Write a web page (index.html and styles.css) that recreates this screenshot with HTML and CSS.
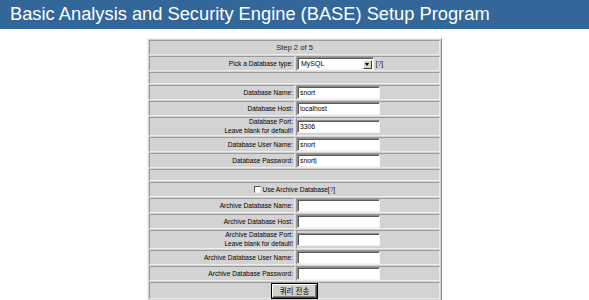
FILE: index.html
```html
<!DOCTYPE html>
<html lang="en">
<head>
  <meta charset="UTF-8" />
  <title>BASE Setup Program</title>
  <link rel="stylesheet" href="styles.css">
</head>
<body>
  <div class="mainheader">Basic Analysis and Security Engine (BASE) Setup Program</div>

  <form class="setup">
    <table class="setup-table">
      <tr><td colspan="2" class="step">Step 2 of 5</td></tr>
      <tr>
        <td class="label">Pick a Database type:</td>
        <td class="field">
          <span class="select"><span class="select-text">MySQL</span><span class="select-btn"></span></span>
          <span class="help">[<a href="#">?</a>]</span>
        </td>
      </tr>
      <tr class="spacer"><td colspan="2"></td></tr>
      <tr><td class="label">Database Name:</td><td class="field"><input type="text" value="snort"></td></tr>
      <tr><td class="label">Database Host:</td><td class="field"><input type="text" value="localhost"></td></tr>
      <tr class="double"><td class="label">Database Port:<br>Leave blank for default!</td><td class="field"><input type="text" value="3306"></td></tr>
      <tr><td class="label">Database User Name:</td><td class="field"><input type="text" value="snort"></td></tr>
      <tr><td class="label">Database Password:</td><td class="field"><input type="text" value="snort|"></td></tr>
      <tr class="spacer"><td colspan="2"></td></tr>
      <tr><td colspan="2" class="center"><span class="checkbox"></span> Use Archive Database[<a href="#">?</a>]</td></tr>
      <tr><td class="label">Archive Database Name:</td><td class="field"><input type="text"></td></tr>
      <tr><td class="label">Archive Database Host:</td><td class="field"><input type="text"></td></tr>
      <tr class="double"><td class="label">Archive Database Port:<br>Leave blank for default!</td><td class="field"><input type="text"></td></tr>
      <tr><td class="label">Archive Database User Name:</td><td class="field"><input type="text"></td></tr>
      <tr><td class="label">Archive Database Password:</td><td class="field"><input type="text"></td></tr>
      <tr class="submit-row"><td colspan="2" class="center"><button type="button" class="submit">쿼리 전송</button></td></tr>
    </table>
  </form>
</body>
</html>
```

FILE: styles.css
```css
* {
  box-sizing: border-box;
}
body {
  margin: 0;
  background: #ffffff;
  font-family: "Liberation Sans", Arial, sans-serif;
  color: #000;
}
.mainheader {
  background: #336799;
  color: #ffffff;
  font-size: 18.3px;
  height: 29px;
  line-height: 28px;
  padding-left: 10px;
  white-space: nowrap;
}
.setup {
  margin: 9px 0 0 147px;
}
.setup-table {
  width: 295px;
  background: #d3d3d3;
  border: 1px solid;
  border-color: #f2f2f2 #8a8a8a #8a8a8a #f2f2f2;
  border-spacing: 1px;
}
.setup-table td {
  border: 1px solid;
  border-color: #9a9a9a #ececec #ececec #9a9a9a;
  padding: 0;
  height: 15px;
  font-size: 6.6px;
  line-height: 8px;
  vertical-align: middle;
}
.setup-table td.label {
  width: 146px;
  text-align: right;
  padding-right: 1px;
}
.setup-table td.step {
  text-align: center;
  font-size: 7.6px;
  color: #222;
}
.setup-table td.center {
  text-align: center;
}
.spacer td {
  height: 12px !important;
}
.double td {
  height: 19px !important;
  line-height: 8.5px !important;
}
.submit-row td {
  height: 17px !important;
}
.field input {
  display: block;
  width: 83px;
  height: 13px;
  padding: 0 2px;
  margin: 0;
  background: #fff;
  border: 1px solid;
  border-color: #8a8a8a #f4f4f4 #f4f4f4 #8a8a8a;
  box-shadow: inset 1px 1px 0 #5a5a5a;
  font-family: "Liberation Sans", Arial, sans-serif;
  font-size: 6.8px;
  color: #000;
  outline: none;
}
.select {
  display: inline-flex;
  vertical-align: middle;
  width: 77px;
  height: 13px;
  background: #fff;
  border: 1px solid;
  border-color: #8a8a8a #f4f4f4 #f4f4f4 #8a8a8a;
  box-shadow: inset 1px 1px 0 #5a5a5a;
}
.select-text {
  flex: 1;
  font-size: 7px;
  line-height: 11px;
  padding-left: 3px;
}
.select-btn {
  width: 9px;
  height: 9px;
  margin: 2px 1px 0 0;
  background: #d4d0c8;
  border: 1px solid;
  border-color: #fff #404040 #404040 #fff;
  position: relative;
}
.select-btn::after {
  content: "";
  position: absolute;
  left: 1px;
  top: 2px;
  border-left: 2.5px solid transparent;
  border-right: 2.5px solid transparent;
  border-top: 3px solid #000;
}
.help {
  font-size: 6.6px;
  vertical-align: middle;
}
a {
  color: #0033cc;
  text-decoration: none;
}
.checkbox {
  display: inline-block;
  width: 7px;
  height: 7px;
  vertical-align: -1px;
  background: #fff;
  border: 1px solid;
  border-color: #555 #eee #eee #555;
}
.submit {
  width: 45px;
  height: 14px;
  padding: 0;
  background: #d4d0c8;
  border: 1px solid;
  border-color: #fff #404040 #404040 #fff;
  box-shadow: inset -1px -1px 0 #808080, 0 0 0 1px #000;
  font-family: "Liberation Sans", "Noto Sans CJK KR", sans-serif;
  font-size: 7.5px;
  color: #000;
}
```
